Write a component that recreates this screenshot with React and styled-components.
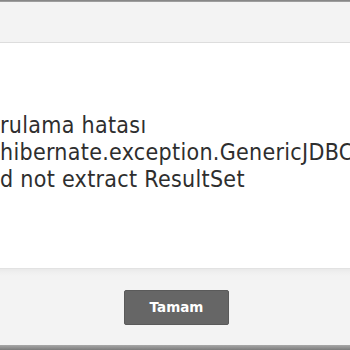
import React from "react";
import styled, { createGlobalStyle } from "styled-components";

const Global = createGlobalStyle`
  html, body { margin: 0; padding: 0; background: #ffffff; }
  body { font-family: "DejaVu Sans Condensed", "DejaVu Sans", sans-serif; overflow: hidden; }
`;

const Page = styled.div`
  width: 350px;
  height: 350px;
  display: flex;
  flex-direction: column;
  overflow: hidden;
`;

const Edge = styled.div`
  height: ${(p) => p.$h}px;
  background: linear-gradient(${(p) => p.$dir}, #7c7c7c, #a8a8a8);
  flex: none;
`;

const Header = styled.div`
  height: 40px;
  flex: none;
  background: #f3f3f3;
  border-bottom: 1px solid #dddddd;
`;

const Body = styled.div`
  flex: 1;
  background: #ffffff;
  padding-top: 69px;
  display: flex;
  flex-direction: column;
`;

const Line = styled.div`
  font-family: "DejaVu Sans Condensed", "DejaVu Sans", sans-serif;
  font-stretch: condensed;
  font-size: 23px;
  letter-spacing: 0.3px;
  line-height: 27px;
  color: #2e2e2e;
  white-space: nowrap;
`;

const Footer = styled.div`
  height: 76px;
  flex: none;
  background: linear-gradient(to bottom, #e9e9e9 0px, #efefef 3px, #f3f3f3 7px, #f3f3f3 100%);
  border-top: 1px solid #e2e2e2;
  display: flex;
  align-items: center;
  justify-content: center;
  padding-left: 3px;
`;

const Button = styled.button`
  width: 105px;
  height: 35px;
  background: #666666;
  border: 1px solid #5a5a5a;
  border-radius: 2px;
  color: #ffffff;
  font-family: "DejaVu Sans", sans-serif;
  font-weight: bold;
  font-size: 13.5px;
  padding: 0;
  cursor: pointer;
`;

export default function App() {
  return (
    <>
      <Global />
      <Page>
        <Edge $h={2} $dir="to bottom" />
        <Header />
        <Body>
          <Line>rulama hatası</Line>
          <Line>hibernate.exception.GenericJDBC</Line>
          <Line>d not extract ResultSet</Line>
        </Body>
        <Footer>
          <Button>Tamam</Button>
        </Footer>
        <Edge $h={5} $dir="to top" />
      </Page>
    </>
  );
}
